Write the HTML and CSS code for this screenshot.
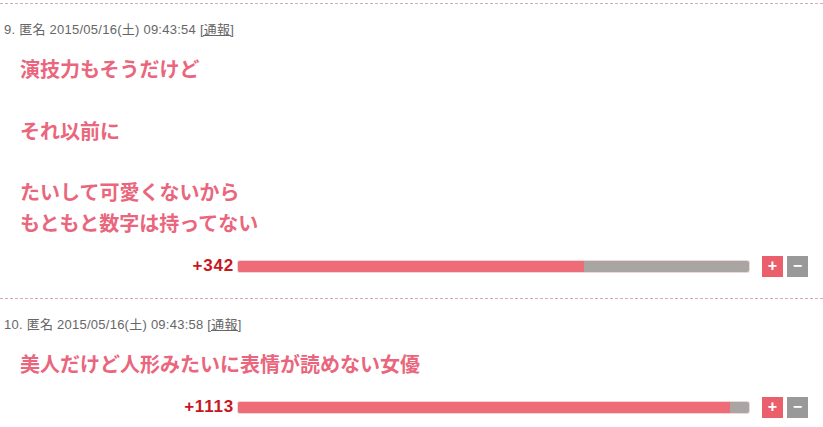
FILE: index.html
```html
<!DOCTYPE html>
<html lang="ja">
<head>
<meta charset="utf-8">
<link rel="stylesheet" href="styles.css">
</head>
<body>
<div class="list">
  <div class="item">
    <div class="meta">9. 匿名 2015/05/16(土) 09:43:54 <a class="report">[通報]</a></div>
    <div class="body">演技力もそうだけど<br><br>それ以前に<br><br>たいして可愛くないから<br>もともと数字は持ってない</div>
    <div class="vote">
      <span class="score">+342</span>
      <div class="bar"><div class="bar-plus" style="width:67.7%"></div></div>
      <div class="buttons"><span class="btn btn-plus">+</span><span class="btn btn-minus">−</span></div>
    </div>
  </div>
  <div class="item">
    <div class="meta">10. 匿名 2015/05/16(土) 09:43:58 <a class="report">[通報]</a></div>
    <div class="body">美人だけど人形みたいに表情が読めない女優</div>
    <div class="vote">
      <span class="score">+1113</span>
      <div class="bar"><div class="bar-plus" style="width:96.3%"></div></div>
      <div class="buttons"><span class="btn btn-plus">+</span><span class="btn btn-minus">−</span></div>
    </div>
  </div>
</div>
</body>
</html>
```
FILE: styles.css
```css
html, body {
  margin: 0;
  padding: 0;
  background: #fff;
}
body {
  font-family: "Noto Sans CJK JP", "Liberation Sans", sans-serif;
  width: 823px;
  height: 427px;
  overflow: hidden;
}
.list {
  padding-top: 3px;
}
.item {
  border-top: 1px dashed #dba9b6;
  padding: 17px 15px 21px 4px;
}
.meta {
  font-family: "Liberation Sans", "Noto Sans CJK JP", sans-serif;
  font-size: 13px;
  letter-spacing: 0.25px;
  line-height: 18px;
  color: #666;
}
.report {
  color: #666;
  text-decoration: underline;
}
.body {
  margin: 15px 0 0 16px;
  font-size: 20px;
  line-height: 30.8px;
  font-weight: bold;
  color: #ea667d;
}
.vote {
  display: flex;
  align-items: center;
  margin-top: 17px;
  height: 21px;
}
.score {
  width: 230px;
  margin-right: 4px;
  text-align: right;
  font-family: "Liberation Sans", sans-serif;
  font-weight: bold;
  font-size: 17px;
  letter-spacing: 0.8px;
  color: #c8161e;
}
.bar {
  flex: 1;
  height: 11px;
  background: #a9a5a2;
  border-radius: 2px;
  overflow: hidden;
  box-shadow: 0 0 0 1px #f1d6d6;
}
.bar-plus {
  height: 100%;
  background: #ee6b78;
}
.buttons {
  display: flex;
  gap: 4px;
  margin-left: 13px;
}
.btn {
  width: 21px;
  height: 21px;
  display: flex;
  align-items: center;
  justify-content: center;
  color: #fff;
  font-family: "Liberation Sans", sans-serif;
  font-size: 16px;
  font-weight: bold;
  line-height: 1;
}
.btn-plus {
  background: #eb5f6c;
}
.btn-minus {
  background: #999;
}
```
